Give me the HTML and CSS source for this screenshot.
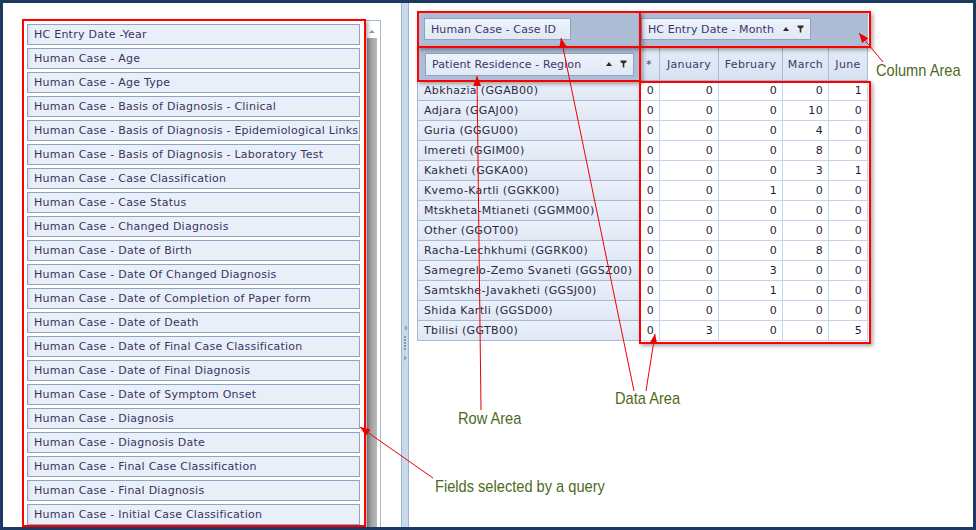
FILE: index.html
```html
<!DOCTYPE html>
<html>
<head>
<meta charset="utf-8">
<link rel="stylesheet" href="styles.css">
</head>
<body>
<div class="frame">
  <div class="left-pane">
    <div class="field-list">
      <div class="items">
        <div class="item">HC Entry Date -Year</div>
        <div class="item">Human Case - Age</div>
        <div class="item">Human Case - Age Type</div>
        <div class="item">Human Case - Basis of Diagnosis - Clinical</div>
        <div class="item">Human Case - Basis of Diagnosis - Epidemiological Links</div>
        <div class="item">Human Case - Basis of Diagnosis - Laboratory Test</div>
        <div class="item">Human Case - Case Classification</div>
        <div class="item">Human Case - Case Status</div>
        <div class="item">Human Case - Changed Diagnosis</div>
        <div class="item">Human Case - Date of Birth</div>
        <div class="item">Human Case - Date Of Changed Diagnosis</div>
        <div class="item">Human Case - Date of Completion of Paper form</div>
        <div class="item">Human Case - Date of Death</div>
        <div class="item">Human Case - Date of Final Case Classification</div>
        <div class="item">Human Case - Date of Final Diagnosis</div>
        <div class="item">Human Case - Date of Symptom Onset</div>
        <div class="item">Human Case - Diagnosis</div>
        <div class="item">Human Case - Diagnosis Date</div>
        <div class="item">Human Case - Final Case Classification</div>
        <div class="item">Human Case - Final Diagnosis</div>
        <div class="item">Human Case - Initial Case Classification</div>
      </div>
      <div class="scrollbar">
        <div class="sb-up"><span class="tri-up"></span></div>
        <div class="sb-thumb"></div>
      </div>
    </div>
  </div>

  <div class="splitter">
    <div class="grip">
      <span class="tri-l"></span>
      <span class="dots"><i></i><i></i><i></i><i></i><i></i></span>
      <span class="tri-r"></span>
    </div>
  </div>

  <div class="right-pane">
    <div class="pivot">
      <div class="area filter-area"><div class="fbtn fbtn-case">Human Case - Case ID</div></div>
      <div class="area col-area">
        <div class="fbtn fbtn-month">HC Entry Date - Month
          <span class="btn-icons"><span class="sort"></span><svg class="flt" width="7" height="8" viewBox="0 0 7 8"><path d="M0.5 0.5H6.5V2L4.3 3.6V7.5H2.7V3.6L0.5 2Z" fill="#2b2b2b"/></svg></span>
        </div>
      </div>
      <div class="area row-area">
        <div class="fbtn fbtn-region">Patient Residence - Region
          <span class="btn-icons"><span class="sort"></span><svg class="flt" width="7" height="8" viewBox="0 0 7 8"><path d="M0.5 0.5H6.5V2L4.3 3.6V7.5H2.7V3.6L0.5 2Z" fill="#2b2b2b"/></svg></span>
        </div>
      </div>
      <div class="hcell">*</div>
      <div class="hcell">January</div>
      <div class="hcell">February</div>
      <div class="hcell">March</div>
      <div class="hcell">June</div>

      <div class="rcell">Abkhazia (GGAB00)</div><div class="dcell">0</div><div class="dcell">0</div><div class="dcell">0</div><div class="dcell">0</div><div class="dcell">1</div>
      <div class="rcell">Adjara (GGAJ00)</div><div class="dcell">0</div><div class="dcell">0</div><div class="dcell">0</div><div class="dcell">10</div><div class="dcell">0</div>
      <div class="rcell">Guria (GGGU00)</div><div class="dcell">0</div><div class="dcell">0</div><div class="dcell">0</div><div class="dcell">4</div><div class="dcell">0</div>
      <div class="rcell">Imereti (GGIM00)</div><div class="dcell">0</div><div class="dcell">0</div><div class="dcell">0</div><div class="dcell">8</div><div class="dcell">0</div>
      <div class="rcell">Kakheti (GGKA00)</div><div class="dcell">0</div><div class="dcell">0</div><div class="dcell">0</div><div class="dcell">3</div><div class="dcell">1</div>
      <div class="rcell">Kvemo-Kartli (GGKK00)</div><div class="dcell">0</div><div class="dcell">0</div><div class="dcell">1</div><div class="dcell">0</div><div class="dcell">0</div>
      <div class="rcell">Mtskheta-Mtianeti (GGMM00)</div><div class="dcell">0</div><div class="dcell">0</div><div class="dcell">0</div><div class="dcell">0</div><div class="dcell">0</div>
      <div class="rcell">Other (GGOT00)</div><div class="dcell">0</div><div class="dcell">0</div><div class="dcell">0</div><div class="dcell">0</div><div class="dcell">0</div>
      <div class="rcell">Racha-Lechkhumi (GGRK00)</div><div class="dcell">0</div><div class="dcell">0</div><div class="dcell">0</div><div class="dcell">8</div><div class="dcell">0</div>
      <div class="rcell">Samegrelo-Zemo Svaneti (GGSZ00)</div><div class="dcell">0</div><div class="dcell">0</div><div class="dcell">3</div><div class="dcell">0</div><div class="dcell">0</div>
      <div class="rcell">Samtskhe-Javakheti (GGSJ00)</div><div class="dcell">0</div><div class="dcell">0</div><div class="dcell">1</div><div class="dcell">0</div><div class="dcell">0</div>
      <div class="rcell">Shida Kartli (GGSD00)</div><div class="dcell">0</div><div class="dcell">0</div><div class="dcell">0</div><div class="dcell">0</div><div class="dcell">0</div>
      <div class="rcell">Tbilisi (GGTB00)</div><div class="dcell">0</div><div class="dcell">3</div><div class="dcell">0</div><div class="dcell">0</div><div class="dcell">5</div>
    </div>
  </div>

  <!-- annotations -->
  <div class="rbox rbox-list"></div>
  <div class="rbox rbox-filter"></div>
  <div class="rbox rbox-col"></div>
  <div class="rbox rbox-row"></div>
  <div class="rbox rbox-data"></div>

  <svg class="arrows" width="976" height="530" viewBox="0 0 976 530">
    <defs>
      <marker id="ah" viewBox="0 0 10 8" refX="10" refY="4" markerWidth="10" markerHeight="8" markerUnits="userSpaceOnUse" orient="auto">
        <path d="M0 0L10 4L0 8Z" fill="#ee0000"/>
      </marker>
    </defs>
    <g stroke="#ee0000" stroke-width="1" fill="none">
      <line x1="883" y1="62" x2="859" y2="33" marker-end="url(#ah)"/>
      <line x1="634" y1="391" x2="561" y2="38" marker-end="url(#ah)"/>
      <line x1="646" y1="391" x2="655" y2="334" marker-end="url(#ah)"/>
      <line x1="481" y1="410" x2="477" y2="76" marker-end="url(#ah)"/>
      <line x1="433" y1="478" x2="360" y2="427" marker-end="url(#ah)"/>
    </g>
  </svg>

  <div class="label lbl-col">Column Area</div>
  <div class="label lbl-data">Data Area</div>
  <div class="label lbl-row">Row Area</div>
  <div class="label lbl-fields">Fields selected by a query</div>
</div>
</body>
</html>
```
FILE: styles.css
```css
* { box-sizing: border-box; }
html, body { margin: 0; padding: 0; }
body {
  width: 976px;
  height: 530px;
  overflow: hidden;
  font-family: "DejaVu Sans", Verdana, sans-serif;
  font-size: 11px;
  background: #1c3961;
}
.frame {
  position: relative;
  width: 976px;
  height: 530px;
  border: 3px solid #1c3961;
  background: #fff;
  display: flex;
  overflow: hidden;
}

/* ---------- left pane ---------- */
.left-pane {
  width: 398px;
  padding: 17px 0 0 20px;
  overflow: hidden;
}
.field-list {
  width: 358px;
  height: 520px;
  border: 1px solid #a7b8d1;
  padding: 3px 3px 0 3px;
  display: flex;
  gap: 7px;
}
.items {
  width: 333px;
  flex: none;
  display: flex;
  flex-direction: column;
  gap: 3px;
}
.item {
  height: 21px;
  flex: none;
  border: 1px solid #8fa3c2;
  background: linear-gradient(to right, #d6dfee 0, #e9eff9 4px, #e9eff9 100%);
  color: #38345f;
  padding-left: 6px;
  line-height: 19px;
  white-space: nowrap;
  overflow: hidden;
  letter-spacing: 0.25px;
}
.scrollbar {
  width: 10px;
  flex: none;
  display: flex;
  flex-direction: column;
}
.sb-up {
  height: 14px;
  flex: none;
  display: flex;
  justify-content: center;
  align-items: center;
}
.tri-up {
  width: 0; height: 0;
  border-left: 3px solid transparent;
  border-right: 3px solid transparent;
  border-bottom: 3px solid #9a9a9a;
}
.sb-thumb {
  flex: 1;
  background: linear-gradient(to right, #8f8f8f, #a3a3a3 40%, #b9b9b9);
}

/* ---------- splitter ---------- */
.splitter {
  width: 8px;
  flex: none;
  background: #cbd9ed;
  border-left: 1px solid #9db2d0;
  border-right: 1px solid #9db2d0;
  padding-top: 322px;
}
.grip {
  display: flex;
  flex-direction: column;
  align-items: center;
  gap: 5px;
}
.tri-l {
  width: 0; height: 0;
  border-top: 3px solid transparent;
  border-bottom: 3px solid transparent;
  border-right: 3px solid #93a4bd;
}
.tri-r {
  width: 0; height: 0;
  border-top: 3px solid transparent;
  border-bottom: 3px solid transparent;
  border-left: 3px solid #93a4bd;
}
.dots { display: flex; flex-direction: column; gap: 1px; }
.dots i { display: block; width: 2px; height: 2px; background: #8797b0; }

/* ---------- right pane / pivot ---------- */
.right-pane {
  flex: 1;
  padding: 8px 0 0 8px;
}
.pivot {
  display: grid;
  grid-template-columns: 222px 21px 59px 64px 46px 39px;
  grid-template-rows: 36px 34px repeat(13, 20px);
  width: 451px;
  color: #24243f;
  letter-spacing: 0.35px;
}
.area {
  background: #adbdd5;
  display: flex;
  align-items: center;
}
.filter-area { padding-left: 7px; }
.col-area { grid-column: 2 / 7; padding-left: 2px; }
.row-area { padding-left: 7px; border-left: 1px solid #9aadc9; }
.fbtn {
  height: 22px;
  border: 1px solid #8ea3c3;
  background: linear-gradient(#eef3fb, #e0e8f5);
  color: #3a3766;
  padding-left: 6px;
  display: flex;
  align-items: center;
  white-space: nowrap;
  letter-spacing: 0.1px;
}
.fbtn-case { width: 147px; }
.fbtn-month { width: 170px; }
.fbtn-region { width: 209px; height: 23px; }
.btn-icons {
  margin-left: auto;
  display: flex;
  align-items: center;
  gap: 8px;
  padding-right: 6px;
}
.sort {
  width: 0; height: 0;
  border-left: 3px solid transparent;
  border-right: 3px solid transparent;
  border-bottom: 4px solid #2b2b2b;
}
.flt { display: block; }

.hcell {
  background: linear-gradient(#e4ecf8, #d7e2f2);
  border-right: 1px solid #a8bcd9;
  border-bottom: 1px solid #a8bcd9;
  display: flex;
  align-items: center;
  justify-content: center;
  color: #3b3868;
  white-space: nowrap;
  padding-top: 1px;
}
.rcell {
  background: linear-gradient(#ecf1fa, #e0e8f5);
  border-left: 1px solid #a3b5d1;
  border-bottom: 1px solid #a9bad4;
  padding-left: 6px;
  display: flex;
  align-items: center;
  white-space: nowrap;
  color: #2a2a45;
}
.dcell {
  background: #fff;
  border-right: 1px solid #c3d5ee;
  border-bottom: 1px solid #c3d5ee;
  display: flex;
  align-items: center;
  justify-content: flex-end;
  padding-right: 5px;
  color: #1e1e38;
}

/* ---------- annotations ---------- */
.rbox {
  position: absolute;
  border: 2px solid #ff0000;
  box-shadow: 2px 2px 4px rgba(0, 0, 0, 0.35);
  pointer-events: none;
}
.rbox-list   { left: 19px;  top: 16px; width: 344px; height: 508px; }
.rbox-filter { left: 414px; top: 8px;  width: 224px; height: 37px; }
.rbox-col    { left: 636px; top: 8px;  width: 232px; height: 37px; }
.rbox-row    { left: 414px; top: 43px; width: 224px; height: 36px; }
.rbox-data   { left: 636px; top: 78px; width: 232px; height: 263px; }

.arrows {
  position: absolute;
  left: -3px;
  top: -3px;
  pointer-events: none;
}
.label {
  position: absolute;
  font-family: "Liberation Sans", Arial, sans-serif;
  font-size: 17px;
  color: #4e6a1c;
  white-space: nowrap;
  line-height: 20px;
  transform: scaleX(0.86);
  transform-origin: 0 0;
}
.lbl-col    { left: 873px; top: 58px; }
.lbl-data   { left: 612px; top: 386px; }
.lbl-row    { left: 455px; top: 406px; }
.lbl-fields { left: 432px; top: 474px; }
```
